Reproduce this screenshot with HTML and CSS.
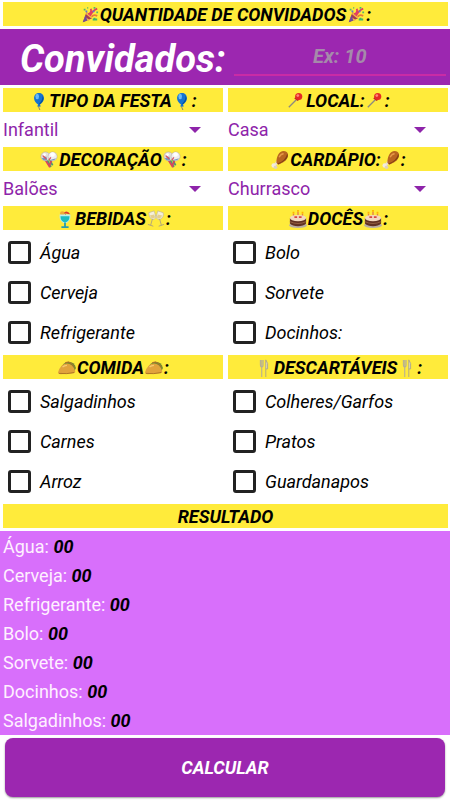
FILE: index.html
```html
<!DOCTYPE html>
<html lang="pt-BR">
<head>
<meta charset="utf-8">
<meta name="viewport" content="width=device-width, initial-scale=1">
<title>Calculadora de festa</title>
<link rel="stylesheet" href="styles.css">
</head>
<body>
<svg class="sprite" aria-hidden="true">
  <symbol id="popper" viewBox="0 0 20 20">
    <path d="M2 18 6 7Q11 9 12 14Z" fill="#a63c50"/>
    <path d="M4 13 9 16M6 8 12 13" stroke="#f2b84b" stroke-width="2"/>
    <path d="M2 18 5 10 7 16Z" fill="#6e4c9b"/>
    <path d="M8 9Q12 8 11 3M10 11Q13 5 18 3" stroke="#e33e61" stroke-width="2" fill="none"/>
    <path d="M12 12Q14 9 18 11" stroke="#e8793a" stroke-width="2" fill="none"/>
    <path d="M13 15h5M15 13v2" stroke="#43b36b" stroke-width="2"/>
    <path d="M3 4h2M7 2h1M14 2h2M17 7h2" stroke="#54b66c" stroke-width="2"/>
    <path d="M5 6h2M13 6h2" stroke="#5b79d5" stroke-width="2"/>
  </symbol>
  <symbol id="balloon" viewBox="0 0 20 20">
    <path d="M10 14Q9 17 11 20" stroke="#777" fill="none"/>
    <path d="M10 1C6 1 4.500 4 4.500 7C4.500 10 7 13 9 14L8 16H12L11 14C13 13 15.500 10 15.500 7C15.500 4 14 1 10 1Z" fill="#1473d2"/>
    <path d="M14 4Q17 9 11 14L10 13Q14 10 14 4Z" fill="#0752a0"/>
    <ellipse cx="8" cy="5" rx="2" ry="3" fill="#65b8fa"/>
  </symbol>
  <symbol id="pin" viewBox="0 0 20 20">
    <path d="M2 17 12 7" stroke="#8d8a80" stroke-width="1.500"/>
    <path d="M8 7 12 10 14 8 11 5Z" fill="#b71c1c"/>
    <circle cx="13" cy="5" r="4" fill="#e52b25"/>
    <circle cx="12" cy="4" r="1.500" fill="#ff8a78"/>
  </symbol>
  <symbol id="confetti" viewBox="0 0 20 20">
    <path d="M8 10 12 18M11 10 14 16" stroke="#4a9a73" stroke-width="2"/>
    <path d="M6 10 11 18M13 10 10 17" stroke="#d6455f" stroke-width="2"/>
    <circle cx="6" cy="6" r="5" fill="#e4e0dc" stroke="#aaa297" stroke-width=".5"/>
    <circle cx="14" cy="6" r="5" fill="#f0eeee" stroke="#aaa297" stroke-width=".5"/>
    <path d="M2 8Q4 12 8 10L7 6M18 8Q15 12 11 10" fill="#7998bd"/>
    <path d="M3 5 7 9M10 10 12 7" stroke="#d75469" stroke-width="1.500"/>
    <circle cx="5" cy="4" r="1.500" fill="#fff"/><circle cx="14" cy="4" r="2.500" fill="#fff"/>
  </symbol>
  <symbol id="drumstick" viewBox="0 0 20 20">
    <path d="M4 16 9 10" stroke="#e9dfcd" stroke-width="3"/>
    <circle cx="3" cy="16" r="2.500" fill="#f3ebdd"/><circle cx="5" cy="18" r="2" fill="#dfd2bc"/>
    <path d="M6 13C6 6 9 0 14 0C19 0 20 5 18 8C16 12 11 14 8 15Z" fill="#b96520"/>
    <path d="M18 3Q20 6 16 10Q12 13 8 15L7 14Q16 11 18 3Z" fill="#824013"/>
    <path d="M9 7Q11 3 14 3" stroke="#e79a48" stroke-width="1.500" fill="none"/>
  </symbol>
  <symbol id="cocktail" viewBox="0 0 20 20">
    <path d="M9 3 13 8" stroke="#705b47"/>
    <path d="M8 4Q12-1 16 5L11 4Z" fill="#d93b32"/><circle cx="7" cy="4" r="2.500" fill="#efaa38"/>
    <path d="M4 5H16Q17 13 10 15Q3 13 4 5Z" fill="#b8edf0"/>
    <path d="M5 7H15Q15 13 10 14Q5 13 5 7Z" fill="#19bdc1"/>
    <path d="M10 14V18M6 19H14" stroke="#279cae" stroke-width="2"/>
  </symbol>
  <symbol id="glasses" viewBox="0 0 20 20">
    <path d="M2 3 8 1 10 8Q8 12 5 10Q2 8 2 3ZM12 1 18 3Q19 8 15 10Q12 12 10 8Z" fill="#f5efd9" stroke="#bbb39b" stroke-width=".7"/>
    <path d="M3 6 8 5 9 8Q7 10 5 9ZM12 5 17 6 15 9Q12 10 11 8Z" fill="#e4cf8c"/>
    <path d="M6 10 4 17M1 16 7 18M14 10 16 17M13 18 19 16" stroke="#ada17e" fill="none"/>
  </symbol>
  <symbol id="cake" viewBox="0 0 20 20">
    <path d="M5 4V9M10 2V8M15 4V9" stroke="#e77e43" stroke-width="1.500"/>
    <path d="M5 2V4M10 0V2M15 2V4" stroke="#ffb300" stroke-width="2"/>
    <ellipse cx="10" cy="17" rx="10" ry="3" fill="#b8ada1"/>
    <path d="M1 9V15Q4 18 10 18Q16 18 19 15V9Z" fill="#613222"/>
    <path d="M1 13Q10 17 19 13" stroke="#9a6546" fill="none"/>
    <ellipse cx="10" cy="9" rx="9" ry="3.500" fill="#f3d8be"/>
    <path d="M6 8H9M11 8H14" stroke="#d94444" stroke-width="2"/>
  </symbol>
  <symbol id="taco" viewBox="0 0 20 20">
    <path d="M2 13Q5 3 12 3Q18 3 20 10L18 14Z" fill="#768c31"/>
    <path d="M8 4Q12 2 15 5L18 9" stroke="#b9682b" fill="none"/>
    <path d="M0 15Q3 5 10 5Q16 5 19 13Q20 16 15 16L3 17Q0 17 0 15Z" fill="#e1a33c"/>
    <path d="M1 16Q10 17 18 15" stroke="#a97022" fill="none"/>
    <path d="M5 9Q7 7 10 7" stroke="#f5ca72" stroke-width="1.500" fill="none"/>
  </symbol>
  <symbol id="cutlery" viewBox="0 0 20 20">
    <path d="M6 1V7Q6 9 7.500 9Q9 9 9 7V1M7.500 1V20" stroke="#b5af96" stroke-width="1.200" fill="none"/>
    <path d="M12 20V1Q15 4 14 11H12" stroke="#aaa489" stroke-width="1" fill="#e5dfbd"/>
  </symbol>
  <symbol id="arrow" viewBox="0 0 12 6"><path d="M0 0H12L6 6Z" fill="#8e24aa"/></symbol>
</svg>
<form class="page">
  <h2 class="title"><svg class="emoji"><use href="#popper"/></svg>QUANTIDADE DE CONVIDADOS<svg class="emoji"><use href="#popper"/></svg>:</h2>
  <div class="guests">
    <label class="guests-label" for="guests">Convidados:</label>
    <input class="guests-input" id="guests" type="text" inputmode="numeric" placeholder="Ex: 10">
  </div>
  <div class="columns">
    <section class="group">
      <h2 class="title"><svg class="emoji"><use href="#balloon"/></svg><label for="type">TIPO DA FESTA</label><svg class="emoji"><use href="#balloon"/></svg>:</h2>
      <div class="picker"><select id="type"><option>Infantil</option></select><svg class="arrow"><use href="#arrow"/></svg></div>
    </section>
    <section class="group">
      <h2 class="title"><svg class="emoji"><use href="#pin"/></svg><label for="place">LOCAL:</label><svg class="emoji"><use href="#pin"/></svg>:</h2>
      <div class="picker"><select id="place"><option>Casa</option></select><svg class="arrow"><use href="#arrow"/></svg></div>
    </section>
    <section class="group">
      <h2 class="title"><svg class="emoji"><use href="#confetti"/></svg><label for="decor">DECORAÇÃO</label><svg class="emoji"><use href="#confetti"/></svg>:</h2>
      <div class="picker"><select id="decor"><option>Balões</option></select><svg class="arrow"><use href="#arrow"/></svg></div>
    </section>
    <section class="group">
      <h2 class="title"><svg class="emoji"><use href="#drumstick"/></svg><label for="menu">CARDÁPIO:</label><svg class="emoji"><use href="#drumstick"/></svg>:</h2>
      <div class="picker"><select id="menu"><option>Churrasco</option></select><svg class="arrow"><use href="#arrow"/></svg></div>
    </section>
    <section class="group">
      <h2 class="title"><svg class="emoji"><use href="#cocktail"/></svg>BEBIDAS<svg class="emoji"><use href="#glasses"/></svg>:</h2>
      <div class="checks">
        <label class="check"><input type="checkbox">Água</label>
        <label class="check"><input type="checkbox">Cerveja</label>
        <label class="check"><input type="checkbox">Refrigerante</label>
      </div>
    </section>
    <section class="group">
      <h2 class="title"><svg class="emoji"><use href="#cake"/></svg>DOCÊS<svg class="emoji"><use href="#cake"/></svg>:</h2>
      <div class="checks">
        <label class="check"><input type="checkbox">Bolo</label>
        <label class="check"><input type="checkbox">Sorvete</label>
        <label class="check"><input type="checkbox">Docinhos:</label>
      </div>
    </section>
    <section class="group">
      <h2 class="title"><svg class="emoji"><use href="#taco"/></svg>COMIDA<svg class="emoji"><use href="#taco"/></svg>:</h2>
      <div class="checks">
        <label class="check"><input type="checkbox">Salgadinhos</label>
        <label class="check"><input type="checkbox">Carnes</label>
        <label class="check"><input type="checkbox">Arroz</label>
      </div>
    </section>
    <section class="group">
      <h2 class="title"><svg class="emoji"><use href="#cutlery"/></svg>DESCARTÁVEIS<svg class="emoji"><use href="#cutlery"/></svg>:</h2>
      <div class="checks">
        <label class="check"><input type="checkbox">Colheres/Garfos</label>
        <label class="check"><input type="checkbox">Pratos</label>
        <label class="check"><input type="checkbox">Guardanapos</label>
      </div>
    </section>
  </div>
  <h2 class="title">RESULTADO</h2>
  <div class="results">
    <p>Água: <output>00</output></p>
    <p>Cerveja: <output>00</output></p>
    <p>Refrigerante: <output>00</output></p>
    <p>Bolo: <output>00</output></p>
    <p>Sorvete: <output>00</output></p>
    <p>Docinhos: <output>00</output></p>
    <p>Salgadinhos: <output>00</output></p>
  </div>
  <button class="calculate" type="button">CALCULAR</button>
</form>
</body>
</html>
```
FILE: styles.css
```css
* {
  box-sizing: border-box;
}

body {
  margin: 0;
  background: #fff;
  color: #000;
  font: 18px/24px Roboto, sans-serif;
}

.sprite {
  display: none;
}

.page {
  display: flex;
  flex-direction: column;
  gap: 3px;
  min-height: 100vh;
  padding: 2px 0 3px;
}

.title {
  display: flex;
  align-items: center;
  justify-content: center;
  height: 24px;
  margin: 0 2px 0 3px;
  padding-top: 2px;
  background: #ffeb3b;
  font: italic 700 18px/24px Roboto, sans-serif;
}

.emoji {
  width: 18px;
  height: 18px;
  margin: 0 1px;
}

.guests {
  display: flex;
  align-items: center;
  gap: 8px;
  height: 56px;
  padding: 0 4px 0 20px;
  background: #9c27b0;
}

.guests-label {
  padding-top: 4px;
  color: #fff;
  font: italic 700 38px/52px Roboto, sans-serif;
}

.guests-input {
  flex: 1;
  min-width: 0;
  height: 38px;
  padding: 0;
  border: 0;
  border-bottom: 2px solid #c92ba6;
  border-radius: 0;
  background: transparent;
  color: #fff;
  font: italic 700 20px/36px Roboto, sans-serif;
  text-align: center;
}

.guests-input::placeholder {
  color: #a58aaa;
  opacity: 1;
}

.columns {
  display: grid;
  grid-template-columns: 1fr 1fr;
  row-gap: 3px;
}

.group {
  display: grid;
  gap: 3px;
}

.picker {
  display: grid;
  align-items: center;
}

.picker select {
  grid-area: 1 / 1;
  height: 29px;
  padding: 0 3px;
  border: 0;
  appearance: none;
  background: transparent;
  color: #8e24aa;
  font: 18px/29px Roboto, sans-serif;
}

.arrow {
  grid-area: 1 / 1;
  justify-self: end;
  width: 12px;
  height: 6px;
  margin-right: 24px;
  pointer-events: none;
}

.checks {
  display: grid;
  gap: 1px;
}

.check {
  display: flex;
  align-items: center;
  gap: 9px;
  height: 39px;
  padding-left: 8px;
  font-style: italic;
}

.check input {
  width: 23px;
  height: 23px;
  margin: 0;
  border: 3px solid #222;
  border-radius: 3px;
  appearance: none;
}

.check input:checked {
  background: #9c27b0;
}

.results {
  flex: 1;
  padding: 1px 3px 0;
  background: #d86ffb;
  color: #fff0ff;
}

.results p {
  margin: 0;
  line-height: 29px;
}

.results output {
  color: #000;
  font-style: italic;
  font-weight: 700;
}

.calculate {
  height: 59px;
  margin: 0 5px;
  border: 0;
  border-radius: 8px;
  background: #9c27b0;
  box-shadow: 0 1px 2px #0006;
  color: #fff;
  font: italic 700 18px/24px Roboto, sans-serif;
}
```
